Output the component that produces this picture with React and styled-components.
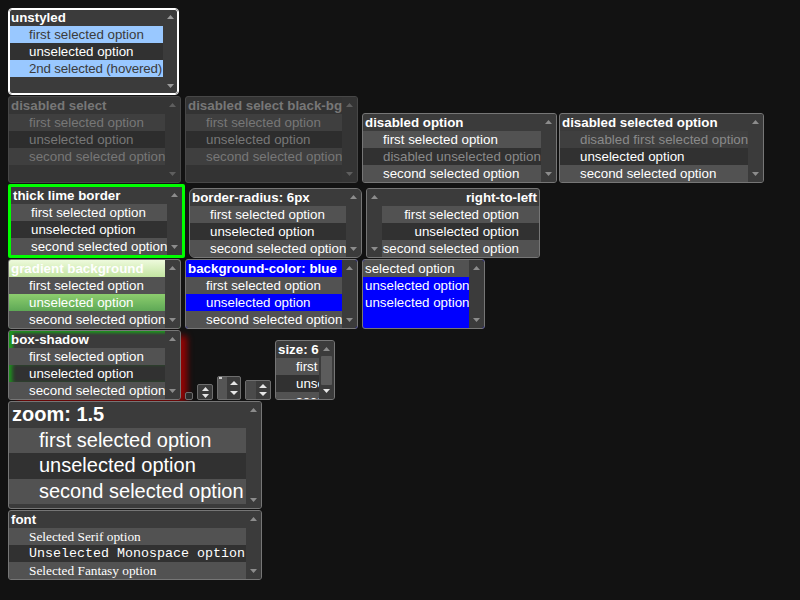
import React from 'react'
import styled, { createGlobalStyle } from 'styled-components'

const GlobalStyle = createGlobalStyle`
  html, body {
    margin: 0;
    background: #121212;
  }
  body {
    font-family: 'Liberation Sans', Arial, sans-serif;
    font-size: 13.333px;
    color: #fff;
  }
`

const ROW_BG = {
  sel: '#525252',
  un: '#313131',
  hi: '#99c8ff',
  dsel: '#3f3f3f',
  dun: '#2d2d2d',
  clear: 'transparent',
}

const OPTS = ['first selected option', 'unselected option', 'second selected option']
const basic = [
  [OPTS[0], 'sel'],
  [OPTS[1], 'un'],
  [OPTS[2], 'sel'],
]
const dimmed = [
  [OPTS[0], 'dsel'],
  [OPTS[1], 'dun'],
  [OPTS[2], 'dsel'],
]

const Page = styled.div`
  display: flex;
  flex-direction: column;
  align-items: flex-start;
  gap: 1px;
  padding: 8px;
`

const Line = styled.div`
  display: flex;
  align-items: flex-end;
  gap: 4px;
`

const Box = styled.div`
  box-sizing: border-box;
  flex: none;
  display: flex;
  flex-direction: ${(p) => (p.$rtl ? 'row-reverse' : 'row')};
  width: ${(p) => p.$w}px;
  height: ${(p) => p.$h}px;
  margin-left: ${(p) => p.$gapLeft || 0}px;
  overflow: hidden;
  border: ${(p) => p.$border || '1px solid #767676'};
  border-radius: ${(p) => p.$radius ?? 3}px;
  background: ${(p) => p.$bg || '#3b3b3b'};
  color: ${(p) => (p.$muted ? '#777' : '#fff')};
  box-shadow: ${(p) => p.$shadow || 'none'};
  outline: ${(p) => (p.$ring ? '1px solid #ffffff' : 'none')};
  outline-offset: -2px;
`

const Options = styled.div`
  flex: 1;
  min-width: 0;
  display: flex;
  flex-direction: column;
  overflow: hidden;
  direction: ${(p) => (p.$rtl ? 'rtl' : 'ltr')};
`

const Label = styled.div`
  flex: none;
  height: ${(p) => p.$h}px;
  line-height: ${(p) => p.$h}px;
  padding-inline: ${(p) => p.$pad}px 2px;
  font-weight: bold;
  font-size: ${(p) => p.$size || 'inherit'};
  white-space: nowrap;
  overflow: hidden;
  box-shadow: ${(p) => (p.$glow ? 'inset 5px 3px 3px -1px #1d981d' : 'none')};
`

const Row = styled.div`
  flex: none;
  height: ${(p) => p.$h}px;
  line-height: ${(p) => p.$h}px;
  padding-inline: ${(p) => p.$indent}px 2px;
  white-space: nowrap;
  overflow: hidden;
  letter-spacing: ${(p) => (p.$tight ? '-0.15px' : 'normal')};
  background: ${(p) => ROW_BG[p.$kind]};
  color: ${(p) => (p.$kind === 'hi' ? '#3b3b3b' : p.$muted ? '#8a8a8a' : 'inherit')};
  font-family: ${(p) => p.$font || 'inherit'};
  font-size: ${(p) => p.$size || 'inherit'};
  box-shadow: ${(p) => (p.$glow ? 'inset 5px 0 4px -2px #1d981d' : 'none')};
`

const Track = styled.div`
  flex: none;
  box-sizing: border-box;
  width: 15px;
  display: flex;
  flex-direction: column;
  align-items: center;
  justify-content: space-between;
  padding: 6px 0;
  background: ${(p) => p.$bg || '#3b3b3b'};
`

const Thumb = styled.div`
  width: 11px;
  height: 29px;
  margin: 5px 0 auto;
  background: #5c5c5c;
  border-radius: 1px;
`

const Tri = styled.svg`
  display: block;
  flex: none;
  fill: ${(p) => p.$color || '#8c8c8c'};
`

const Arrow = ({ up, color }) => (
  <Tri $color={color} width="7" height="4" viewBox="0 0 7 4">
    <polygon points={up ? '0,4 3.5,0 7,4' : '0,0 7,0 3.5,4'} />
  </Tri>
)

const Mini = styled.div`
  box-sizing: border-box;
  flex: none;
  display: flex;
  width: ${(p) => p.$w}px;
  height: ${(p) => p.$h}px;
  border: 1px solid #6e6e6e;
  border-radius: 2px;
  background: ${(p) => p.$bg || '#3b3b3b'};
  overflow: hidden;
`

const Stub = styled.div`
  flex: none;
  width: ${(p) => p.$w}px;
  background: ${(p) => p.$bg};
`

const SpinArea = styled.div`
  flex: 1;
  display: flex;
  align-items: center;
  justify-content: center;
`

const Spin = ({ w = 7, gap = 3 }) => {
  const h = 8 + gap
  return (
    <Tri $color="#e6e6e6" width={w} height={h} viewBox={`0 0 ${w} ${h}`}>
      <polygon points={`0,4 ${w / 2},0 ${w},4`} />
      <polygon points={`0,${h - 4} ${w},${h - 4} ${w / 2},${h}`} />
    </Tri>
  )
}

function ListBox({
  label,
  rows,
  rowH = 17,
  indent = 20,
  pad = 2,
  size,
  glow,
  rtl,
  trackBg,
  arrowColor,
  downColor,
  thumb,
  ...box
}) {
  return (
    <Box $rtl={rtl} {...box}>
      <Options $rtl={rtl}>
        {label && (
          <Label $h={rowH} $pad={pad} $size={size} $glow={glow}>
            {label}
          </Label>
        )}
        {rows.map(([text, kind, extra = {}], i) => (
          <Row
            key={i}
            $kind={kind}
            $h={rowH}
            $size={size}
            $indent={label ? indent : 2}
            $glow={glow && kind === 'un'}
            $muted={extra.muted}
            $font={extra.font}
            $tight={extra.tight}
          >
            {text}
          </Row>
        ))}
      </Options>
      <Track $bg={trackBg}>
        <Arrow up color={arrowColor} />
        {thumb && <Thumb />}
        <Arrow color={downColor || arrowColor} />
      </Track>
    </Box>
  )
}

export default function App() {
  return (
    <>
      <GlobalStyle />
      <Page>
        <Line>
          <ListBox
            $w={171}
            $h={87}
            $border="1px solid #ffffff"
            $ring
            $radius={4}
            label="unstyled"
            arrowColor="#9a9a9a"
            rows={[
              [OPTS[0], 'hi'],
              [OPTS[1], 'un'],
              ['2nd selected (hovered)', 'hi', { tight: true }],
            ]}
          />
        </Line>

        <Line>
          <ListBox
            $w={173}
            $h={87}
            $muted
            $bg="#353535"
            $border="1px solid #474747"
            trackBg="#353535"
            arrowColor="#5e5e5e"
            label="disabled select"
            rows={dimmed}
          />
          <ListBox
            $w={173}
            $h={87}
            $muted
            $bg="#333333"
            $border="1px solid #474747"
            trackBg="#343434"
            arrowColor="#5e5e5e"
            label="disabled select black-bg"
            rows={dimmed}
          />
          <ListBox
            $w={195}
            $h={70}
            label="disabled option"
            rows={[
              [OPTS[0], 'sel'],
              ['disabled unselected option', 'un', { muted: true }],
              [OPTS[2], 'sel'],
            ]}
          />
          <ListBox
            $w={205}
            $h={70}
            $gapLeft={-2}
            label="disabled selected option"
            rows={[
              ['disabled first selected option', 'dsel', { muted: true }],
              [OPTS[1], 'un'],
              [OPTS[2], 'sel'],
            ]}
          />
        </Line>

        <Line>
          <ListBox
            $w={177}
            $h={74}
            $border="3px solid #00ff00"
            $radius={2}
            label="thick lime border"
            rows={basic}
          />
          <ListBox $w={173} $h={70} $radius={6} label="border-radius: 6px" rows={basic} />
          <ListBox $w={174} $h={70} rtl label="right-to-left" rows={basic} />
        </Line>

        <Line>
          <ListBox
            $w={173}
            $h={70}
            $bg="linear-gradient(#eefadc, #c3e5a2 25%, #8dce6e 50%, #5ea856 75%, #3d8a40)"
            trackBg="#3d3d3d"
            label="gradient background"
            rows={[
              [OPTS[0], 'sel'],
              [OPTS[1], 'clear'],
              [OPTS[2], 'sel'],
            ]}
          />
          <ListBox
            $w={173}
            $h={70}
            $bg="#0000ff"
            label="background-color: blue"
            rows={[
              [OPTS[0], 'sel'],
              [OPTS[1], 'clear'],
              [OPTS[2], 'sel'],
            ]}
          />
          <ListBox
            $w={123}
            $h={70}
            $bg="#0000ff"
            rows={[
              ['selected option', 'sel'],
              ['unselected option', 'clear'],
              ['unselected option', 'clear'],
            ]}
          />
        </Line>

        <Line>
          <ListBox
            $w={173}
            $h={70}
            $shadow="8px 4px 6px -2px rgba(170, 0, 0, 0.85)"
            glow
            label="box-shadow"
            rows={basic}
          />
          <Mini $w={8} $h={8} $bg="#2a2a2a" />
          <Mini $w={16} $h={16}>
            <SpinArea>
              <Spin w={7} gap={3} />
            </SpinArea>
          </Mini>
          <Mini $w={24} $h={24}>
            <Stub
              $w={9}
              $bg="linear-gradient(#cfcfcf, #cfcfcf) 1px 0 / 3px 2px no-repeat, #555555"
            />
            <SpinArea>
              <Spin w={8} gap={6} />
            </SpinArea>
          </Mini>
          <Mini $w={26} $h={20}>
            <Stub $w={10} $bg="#4a4a4a" />
            <SpinArea>
              <Spin w={8} gap={4} />
            </SpinArea>
          </Mini>
          <ListBox
            $w={60}
            $h={60}
            thumb
            downColor="#e6e6e6"
            label="size: 6"
            rows={basic}
          />
        </Line>

        <Line>
          <ListBox
            $w={254}
            $h={108}
            rowH={25.5}
            indent={30}
            pad={3}
            size="20px"
            label="zoom: 1.5"
            rows={basic}
          />
        </Line>

        <Line>
          <ListBox
            $w={254}
            $h={70}
            label="font"
            rows={[
              ['Selected Serif option', 'sel', { font: "'Liberation Serif', 'Times New Roman', serif" }],
              ['Unselected Monospace option', 'un', { font: "'Liberation Mono', 'Courier New', monospace" }],
              ['Selected Fantasy option', 'sel', { font: "'Liberation Serif', 'Times New Roman', serif" }],
            ]}
          />
        </Line>
      </Page>
    </>
  )
}
